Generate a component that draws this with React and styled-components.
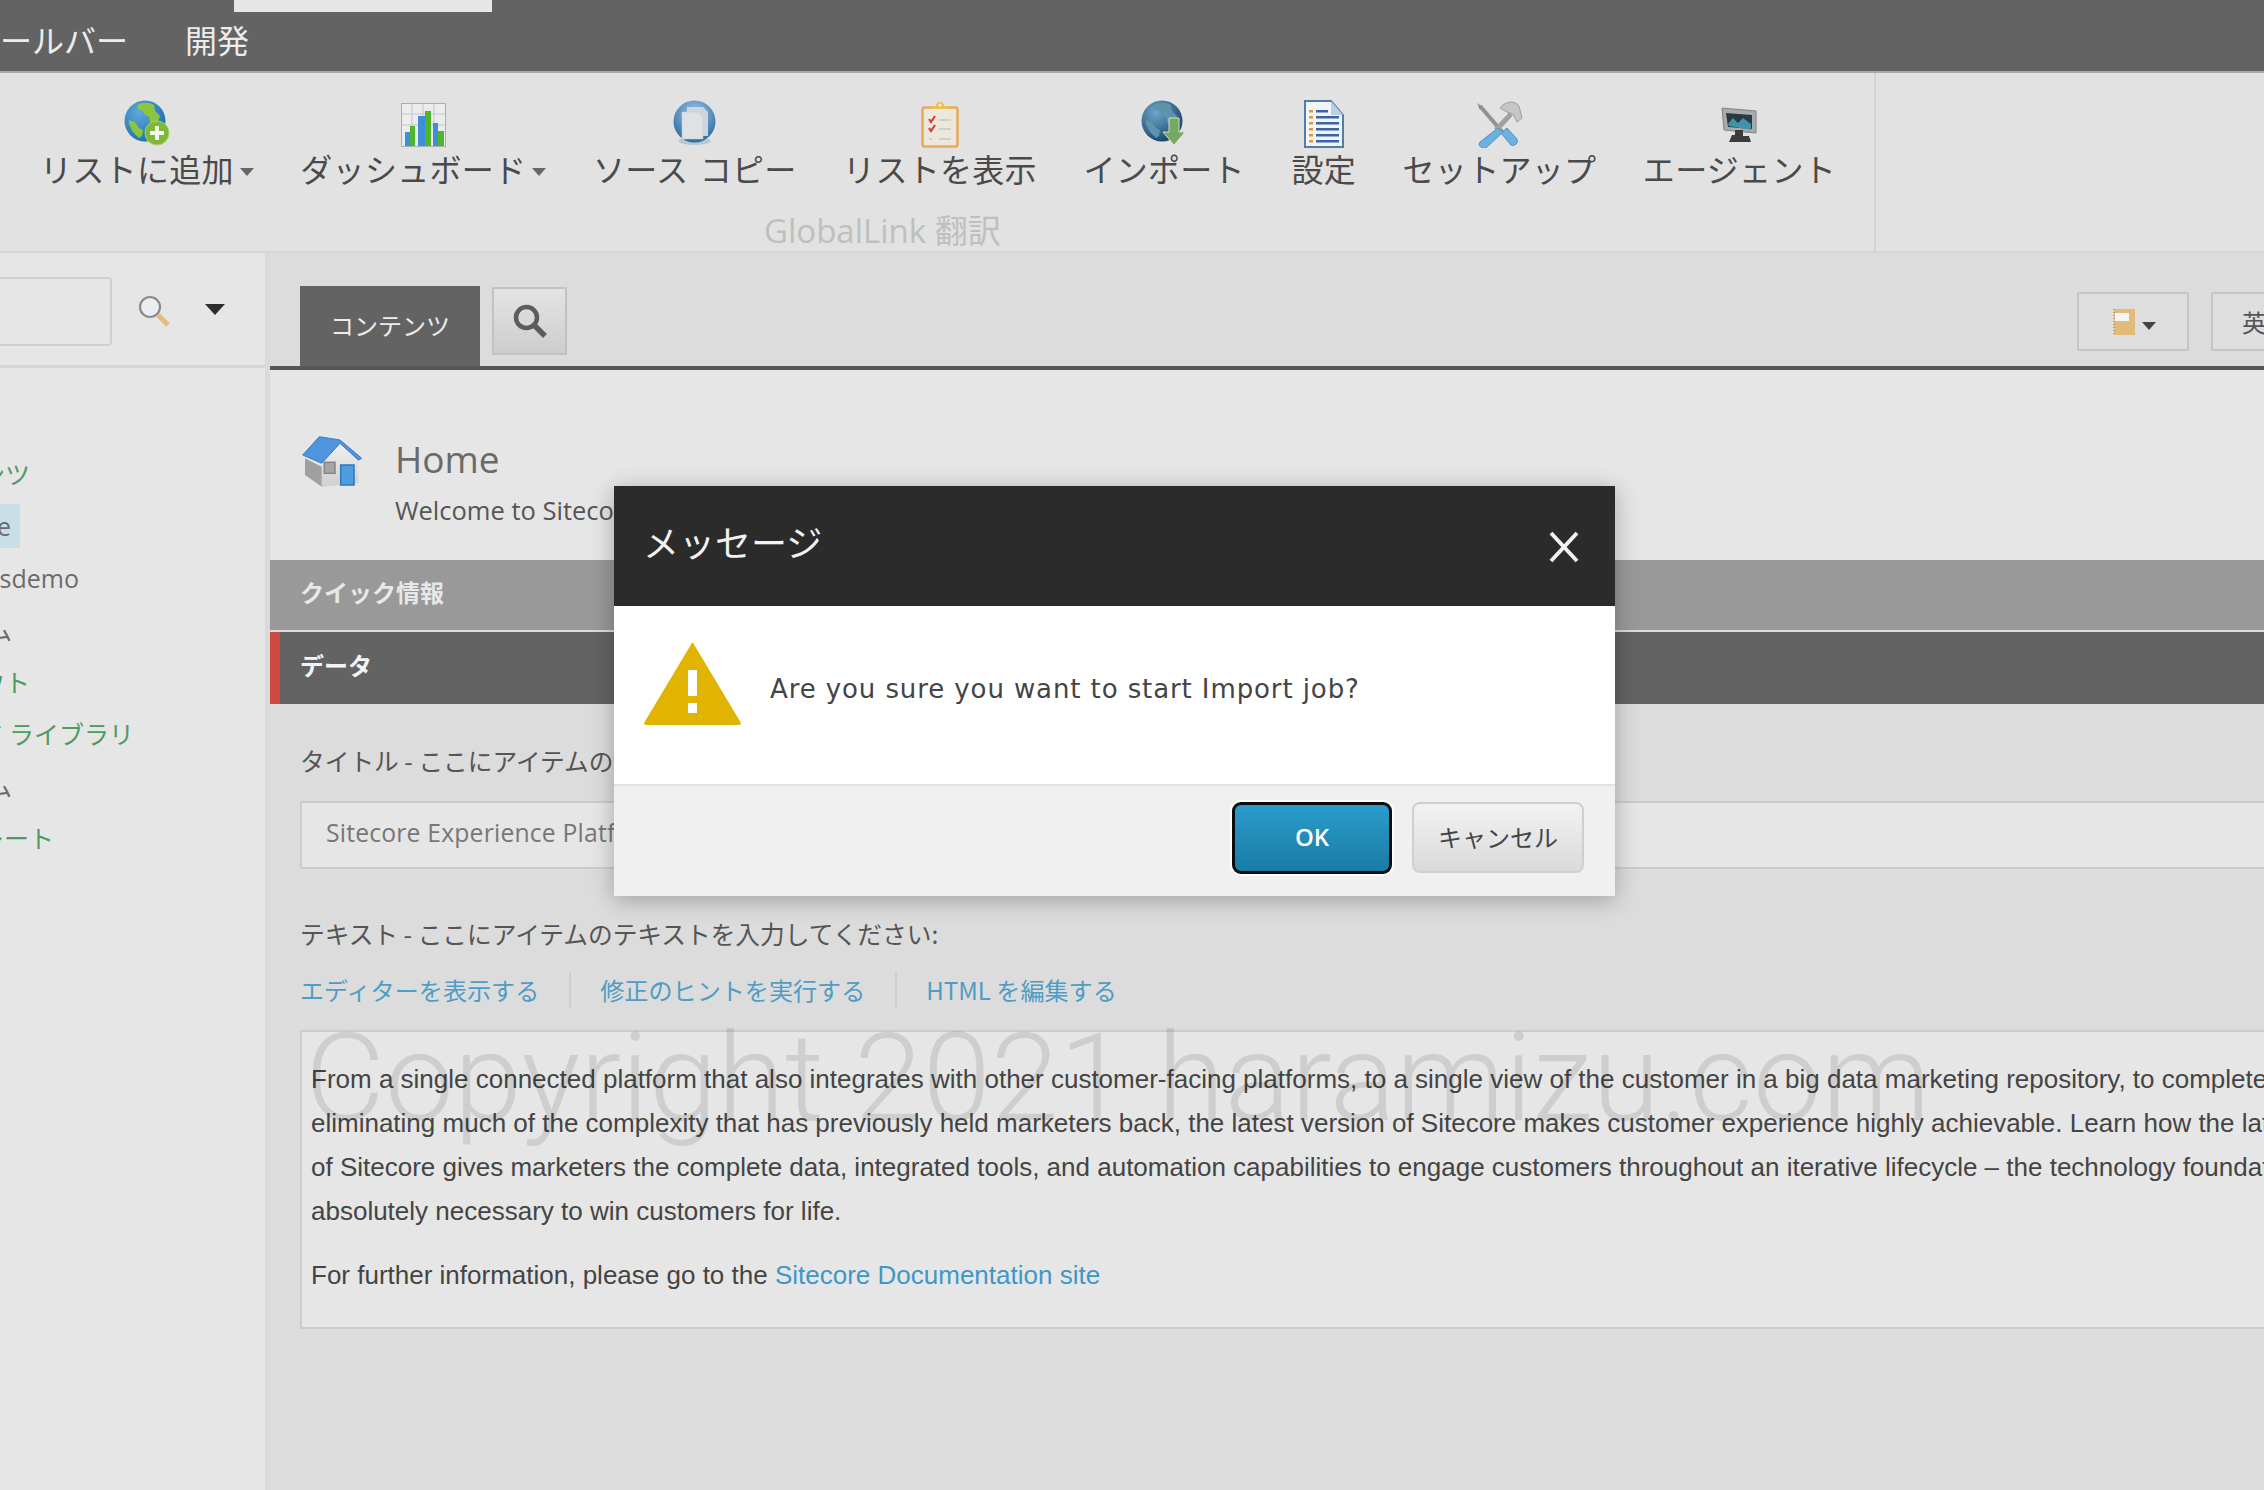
import React from 'react';
import styled, { createGlobalStyle } from 'styled-components';

const Global = createGlobalStyle`
  html, body { margin: 0; padding: 0; background: #dcdcdc; }
  * { box-sizing: border-box; }
  body { font-family: "Noto Sans CJK JP", "Open Sans", sans-serif; }
`;
const CJK = `"Noto Sans CJK JP", "Noto Sans", sans-serif`;
const LATIN = `"Open Sans", "Noto Sans CJK JP", sans-serif`;

const Page = styled.div`
  position: relative; width: 2264px; height: 1490px; overflow: hidden;
  display: flex; flex-direction: column; background: #dcdcdc;
`;
const TopBar = styled.header`
  position: relative; flex: none; height: 73px; background: #636363; border-bottom: 2px solid #a9a9a9;
  display: flex; align-items: center; gap: 57px; margin-left: -32px; padding-top: 7px;
`;
const MenuItem = styled.span`
  font: 400 32px/1 ${CJK}; color: #ececec; white-space: nowrap;
`;
const ActiveTabEdge = styled.div`
  position: absolute; left: 266px; top: 0; width: 258px; height: 12px; background: #e6e6e6;
`;
const Ribbon = styled.section`
  position: relative; flex: none; height: 180px; background: #e2e2e2; border-bottom: 2px solid #d6d6d6;
  display: flex;
`;
const RibbonGroup = styled.div`
  flex: none; width: 1876px; border-right: 2px solid #d4d4d4; display: flex; flex-direction: column;
`;
const RibbonItems = styled.div`
  display: flex; gap: 46.5px; padding: 27px 0 0 40px;
`;
const RibbonItem = styled.div`
  display: flex; flex-direction: column; align-items: center; flex: none;
`;
const IconSlot = styled.div`
  height: 48px; display: flex; align-items: flex-start; justify-content: center;
`;
const RibbonLabel = styled.div`
  font: 400 32px/40px ${CJK}; color: #4a4a4a; white-space: nowrap; display: flex; align-items: center; letter-spacing: .3px; word-spacing: 4px;
`;
const Caret = styled.span`
  width: 0; height: 0; margin: 8px 0 0 6px;
  border-left: 7px solid transparent; border-right: 7px solid transparent;
  border-top: 8px solid ${p => p.$color || '#666'};
`;
const GroupTitle = styled.div`
  margin: 25px 0 0 764px; font: 400 33px/36px ${LATIN}; color: #bfbfbf; white-space: nowrap;
`;
const Workspace = styled.div`
  flex: 1; display: flex; min-height: 0;
`;
const Sidebar = styled.aside`
  flex: none; width: 265px; background: #e6e6e6; overflow: hidden; display: flex; flex-direction: column;
`;
const SearchRow = styled.div`
  flex: none; height: 115px; border-bottom: 3px solid #d4d4d4; display: flex; align-items: center; padding-top: 4px;
`;
const SearchInput = styled.div`
  width: 112px; height: 69px; background: #e6e6e6; border: 2px solid #cfcfcf; border-left: 0; border-radius: 0 4px 4px 0;
`;
const SearchGlass = styled.div`
  margin-left: 26px; display: flex;
`;
const SearchCaret = styled.span`
  width: 0; height: 0; margin-left: 35px; margin-bottom: 4px;
  border-left: 10px solid transparent; border-right: 10px solid transparent; border-top: 11px solid #2d2d2d;
`;
const Tree = styled.div`
  padding-top: 80px; display: flex; flex-direction: column;
`;
const TreeRow = styled.div`
  height: 52px; width: ${p => p.$end}px; display: flex; align-items: center; justify-content: flex-end;
`;
const TreeLabel = styled.span`
  flex: none; font: 400 25px/44px ${LATIN}; white-space: nowrap; color: ${p => p.$green ? '#4f9a63' : '#6b6b6b'};
  background: ${p => p.$selected ? '#c8dfe8' : 'transparent'}; padding-right: ${p => p.$selected ? 9 : 0}px;
`;
const Gutter = styled.div`
  flex: none; width: 5px; background: #dadada;
`;
const Main = styled.main`
  flex: 1; min-width: 0; overflow: hidden; background: #dcdcdc; display: flex; flex-direction: column;
`;
const TabBar = styled.div`
  flex: none; height: 117px; border-bottom: 4px solid #565656; padding-left: 30px; display: flex; align-items: flex-start; background: #dcdcdc;
`;
const ActiveTab = styled.div`
  flex: none; margin-top: 33px; width: 180px; height: 80px; background: #636363; color: #ececec; font: 400 24px/78px ${CJK}; text-align: center;
`;
const SearchButton = styled.div`
  flex: none; margin: 34px 0 0 12px; width: 75px; height: 68px; border: 2px solid #c2c2c2;
  background: linear-gradient(#e4e4e4, #cdcdcd); display: flex; align-items: center; justify-content: center;
`;
const ToolButton = styled.div`
  flex: none; margin: 39px 0 0 ${p => p.$gap}px; width: ${p => p.$w}px; height: 59px; border: 2px solid #c6c6c6; border-radius: 2px;
  background: #dedede; display: flex; align-items: center; padding-left: ${p => p.$pad}px;
  font: 400 24px/1 ${CJK}; color: #555; white-space: nowrap;
`;
const Hero = styled.div`
  flex: none; height: 190px; background: #e6e6e6; padding: 62px 0 0 30px; display: flex;
`;
const HeroText = styled.div`
  margin: 1px 0 0 32px; display: flex; flex-direction: column;
`;
const HeroTitle = styled.div`
  font: 400 37px/52px ${LATIN}; color: #6a6a6a;
`;
const HeroSub = styled.div`
  margin-top: 3px; font: 400 25.5px/44px ${LATIN}; color: #555; white-space: nowrap;
`;
const SectionBar = styled.div`
  flex: none; height: ${p => p.$h}px; background: ${p => p.$bg}; color: ${p => p.$fg};
  padding-left: ${p => p.$accent ? 20 : 30}px; border-left: ${p => p.$accent ? '10px solid #cd4a45' : '0'};
  margin-bottom: ${p => p.$accent ? 0 : 2}px;
  font: 700 24px/${p => p.$h - 7}px ${CJK};
`;
const Form = styled.div`
  padding-left: 30px; width: 2100px; flex: 1;
`;
const FieldLabel = styled.div`
  margin-top: ${p => p.$mt}px; font: 400 24.7px/36px ${CJK}; color: #555; white-space: nowrap;
`;
const TextField = styled.div`
  margin-top: 23px; height: 68px; background: #e6e6e6; border: 2px solid #cccccc; border-radius: 3px;
  padding-left: 24px; font: 400 24.7px/60px ${LATIN}; color: #777; letter-spacing: .2px;
`;
const LinkRow = styled.div`
  margin-top: 21px; height: 35px; display: flex; align-items: center;
`;
const EditorLink = styled.a`
  font: 400 24.1px/35px ${CJK}; color: #4f9dc4; white-space: nowrap;
  & + & { margin-left: 30px; padding-left: 29px; border-left: 2px solid #cdcdcd; }
`;
const RichBox = styled.div`
  margin-top: 23px; height: 299px; background: #e6e6e6; border: 2px solid #cccccc; padding: 25px 0 0 9px; overflow: hidden;
`;
const RichLine = styled.div`
  font: 400 26px/44px "Liberation Sans", Arial, sans-serif; color: #444; white-space: nowrap; margin-top: ${p => p.$mt || 0}px;
`;
const DocLink = styled.a`
  color: #3f97c6;
`;
const Watermark = styled.div`
  position: absolute; left: 305px; top: 1008px; font: 300 123px/1.15 Roboto, sans-serif; color: rgba(0,0,0,.1);
  white-space: nowrap; pointer-events: none;
`;
const Dialog = styled.div`
  position: absolute; left: 614px; top: 486px; width: 1001px; height: 410px; display: flex; flex-direction: column;
  box-shadow: 0 4px 22px rgba(0,0,0,.28);
`;
const DialogHeader = styled.div`
  flex: none; height: 120px; background: #2b2b2b; display: flex; align-items: center; justify-content: space-between; padding: 0 36px 10px 29px;
`;
const DialogTitle = styled.div`
  font: 400 36px/1 ${CJK}; color: #f2f2f2;
`;
const CloseIcon = styled.svg`
  display: block; margin-top: 12px;
`;
const DialogBody = styled.div`
  flex: none; height: 178px; background: #fff; display: flex; align-items: flex-start; padding: 36px 0 0 30px;
`;
const DialogText = styled.div`
  margin: 27px 0 0 29px; font: 400 26px/40px "DejaVu Sans", sans-serif; color: #444; white-space: nowrap; letter-spacing: .9px;
`;
const DialogFooter = styled.div`
  flex: 1; background: #f0f0f0; border-top: 2px solid #e3e3e3; display: flex; justify-content: flex-end; align-items: flex-start; gap: 20px; padding: 16px 31px 0 0;
`;
const PrimaryButton = styled.button`
  width: 160px; height: 72px; border: 3px solid #0c0c0c; border-radius: 9px; background: linear-gradient(#2a9ccc, #1b7ba6);
  font: 600 24px/1 ${LATIN}; color: #fff; box-shadow: 0 0 0 2px #fff; padding: 0 0 2px;
`;
const SecondaryButton = styled.button`
  width: 172px; height: 71px; border: 2px solid #cfcfcf; border-radius: 8px; background: linear-gradient(#f2f2f2, #dadada);
  font: 400 24px/1 ${CJK}; color: #444; padding: 0 0 2px;
`;

const GlobeBase = ({ id, hi = '#5ea9dc', lo = '#1b6aa8', land = '#8cc63f', children }) => (
  <svg width="46" height="46" viewBox="0 0 46 46">
    <defs>
      <radialGradient id={id} cx=".35" cy=".3" r=".8">
        <stop offset="0" stopColor={hi} /><stop offset="1" stopColor={lo} />
      </radialGradient>
    </defs>
    <circle cx="21" cy="21" r="20.5" fill={`url(#${id})`} />
    {land && <path d="M13 5c5-3 12-3 17 0l1 6 5 5-2 6-5 3-3-3-1-5-5-3-1-3-5-2zM5 20l6 2 4 6 4 2-1 6-3 2-6-6-4-8z" fill={land} />}
    {children}
  </svg>
);
const IconAdd = () => (
  <GlobeBase id="g1">
    <circle cx="33" cy="33" r="12" fill="#7db83a" stroke="#a8d36a" strokeWidth="1" />
    <path d="M33 26v14M26 33h14" stroke="#f4f9ee" strokeWidth="4" />
  </GlobeBase>
);
const IconChart = () => (
  <svg width="45" height="47" viewBox="0 -3 45 47">
    <rect x=".5" y=".5" width="44" height="43" fill="#ececec" stroke="#a9adb5" />
    <path d="M11 1v42M22 1v42M33 1v42M1 11h43M1 22h43" stroke="#c6c6c6" />
    <rect x="4" y="29" width="5" height="14" fill="#3d8fdc" /><rect x="9" y="23" width="5" height="20" fill="#4fb52a" />
    <rect x="17" y="13" width="7" height="30" fill="#3d8fdc" /><rect x="24" y="8" width="6" height="35" fill="#4fb52a" />
    <rect x="32" y="20" width="5" height="23" fill="#3d8fdc" /><rect x="37" y="28" width="6" height="15" fill="#4fb52a" />
  </svg>
);
const IconCopy = () => (
  <svg width="43" height="46" viewBox="0 0 43 46">
    <defs><radialGradient id="g2" cx=".5" cy=".3" r=".8"><stop offset="0" stopColor="#9cc6e8" /><stop offset="1" stopColor="#1b5e98" /></radialGradient></defs>
    <ellipse cx="21.5" cy="41" rx="16" ry="4" fill="#9fb6c8" opacity=".6" />
    <circle cx="21.5" cy="21.5" r="21" fill="url(#g2)" />
    <path d="M14 7h16l5 5v24H14z" fill="#cfd5da" /><path d="M9 12h16l5 5v22H9z" fill="#dfe2e5" stroke="#c4c8cc" strokeWidth=".5" />
  </svg>
);
const IconClipboard = () => (
  <svg width="38" height="48" viewBox="0 0 38 48">
    <rect x="1.5" y="7.5" width="35" height="39" rx="2" fill="#eee8dc" stroke="#e6a95a" strokeWidth="2.5" />
    <path d="M10 9V6h5a4 4 0 0 1 8 0h5v3z" fill="#f0bd55" /><circle cx="19" cy="5" r="1.5" fill="#fff3d6" />
    <path d="M8 19l2 3 4-6M8 28l2 3 4-6" stroke="#d6403a" strokeWidth="2.2" fill="none" />
    <path d="M18 20h12M18 29h12M18 39h12M8 39h3" stroke="#cfcfcf" strokeWidth="2" />
  </svg>
);
const IconImport = () => (
  <GlobeBase id="g3" hi="#6ea6c8" lo="#123f66" land="#5f93aa">
    <path d="M28 18h10v14h6L33 45 22 32h6z" fill="#75a860" stroke="#cfe0c4" strokeWidth="1" />
  </GlobeBase>
);
const IconDoc = () => (
  <svg width="40" height="48" viewBox="0 0 40 48">
    <path d="M1 1h26l12 14v32H1z" fill="#f1f5fa" stroke="#4f7fa8" strokeWidth="2" />
    <path d="M27 1v14h12z" fill="#bcd0e0" />
    {[11, 17, 23, 29, 35, 41].map((y, i) => (
      <g key={y}>
        <rect x="5" y={y - 1} width="4" height="2.5" fill="#e8962c" />
        <rect x="12" y={y - 1} width={i < 1 ? 12 : 23} height="2.5" fill="#3a63a8" />
      </g>
    ))}
  </svg>
);
const IconTools = () => (
  <svg width="50" height="48" viewBox="0 0 50 48">
    <path d="M6 6l24 28" stroke="#8d9296" strokeWidth="4" />
    <path d="M3 3l6 4-3 3z" fill="#8d9296" />
    <path d="M27 33l10 12c3 2 8-2 6-6L33 28z" fill="#6fb1de" stroke="#4f93c4" />
    <path d="M37 14L22 30" stroke="#a0a0a0" strokeWidth="5" />
    <path d="M24 28L6 42c-3 4 3 8 7 5l16-15z" fill="#6fb1de" stroke="#4f93c4" />
    <path d="M26 8c6-7 14-8 19-2l3 12-5 4-4-8-6-2z" fill="#c6c6c6" stroke="#9d9d9d" />
  </svg>
);
const IconAgent = () => (
  <svg width="38" height="44" viewBox="0 -6 38 44">
    <path d="M2 2l34 3v22L4 24z" fill="#a9acae" stroke="#7f8183" />
    <path d="M6 7l26 2v14L8 21z" fill="#2a3a42" />
    <path d="M8 18l5-6 5 5 5-5 8 6v6L9 20z" fill="#3f93ad" />
    <path d="M15 24h8v6h6l2 6H9l3-7h3z" fill="#3c3c3c" />
  </svg>
);
const IconHouse = () => (
  <svg width="63" height="56" viewBox="0 0 63 56">
    <defs><linearGradient id="hw" x1="0" x2="0" y1="0" y2="1"><stop offset="0" stopColor="#f2f2f2" /><stop offset="1" stopColor="#cfcfcf" /></linearGradient></defs>
    <path d="M21.7 34.7L40 11.3 58.3 28v23.3L21.7 54.7z" fill="url(#hw)" />
    <path d="M5 26.3l16.7 8.4v20L5 43z" fill="#a0a0a0" />
    <rect x="24.3" y="30.3" width="10.7" height="11" fill="#a6a6a6" stroke="#858585" strokeWidth="1.5" />
    <rect x="40.7" y="33" width="13.3" height="20" fill="#4d9de0" stroke="#2a78c0" strokeWidth="1.5" />
    <path d="M2.7 23L19.3 4.7 40 8l21.7 18.3L58.3 28 40 11.3 21.7 31.3z" fill="#4f95de" stroke="#3a7cc4" />
  </svg>
);
const IconGlass = () => (
  <svg width="32" height="32" viewBox="0 0 32 32">
    <circle cx="12" cy="12" r="10" fill="#e9eef0" stroke="#8a8a8a" strokeWidth="2.2" />
    <path d="M20 20l10 10" stroke="#e3bd7d" strokeWidth="5" />
  </svg>
);
const IconSearchDark = () => (
  <svg width="34" height="34" viewBox="0 0 34 34">
    <circle cx="13.5" cy="13.5" r="10.5" fill="none" stroke="#5c5c5c" strokeWidth="4.5" />
    <path d="M21 21l11 11" stroke="#5c5c5c" strokeWidth="5.5" />
  </svg>
);
const IconNote = () => (
  <svg width="23" height="28" viewBox="0 0 23 28">
    <rect x="1" y="1" width="21" height="26" fill="#e3bb78" />
    <rect x="2" y="5" width="14" height="8" fill="#f4f4f4" />
    <path d="M1 1v26" stroke="#777" strokeDasharray="1 2" />
  </svg>
);

const ribbonItems = [
  { label: 'リストに追加', icon: <IconAdd />, caret: true },
  { label: 'ダッシュボード', icon: <IconChart />, caret: true },
  { label: 'ソース コピー', icon: <IconCopy /> },
  { label: 'リストを表示', icon: <IconClipboard /> },
  { label: 'インポート', icon: <IconImport /> },
  { label: '設定', icon: <IconDoc /> },
  { label: 'セットアップ', icon: <IconTools /> },
  { label: 'エージェント', icon: <IconAgent /> },
];
const treeItems = [
  { text: 'コンテンツ', end: 30, green: true },
  { text: 'Home', end: 20, selected: true },
  { text: 'jsdemo', end: 79 },
  { text: 'フォーム', end: 12 },
  { text: 'レイアウト', end: 30, green: true },
  { text: 'メディア ライブラリ', end: 134, green: true },
  { text: 'システム', end: 12 },
  { text: 'テンプレート', end: 54, green: true },
];

export default function App() {
  return (
    <Page>
      <Global />
      <TopBar>
        <MenuItem>ツールバー</MenuItem>
        <MenuItem>開発</MenuItem>
        <ActiveTabEdge />
      </TopBar>
      <Ribbon>
        <RibbonGroup>
          <RibbonItems>
            {ribbonItems.map(it => (
              <RibbonItem key={it.label}>
                <IconSlot>{it.icon}</IconSlot>
                <RibbonLabel>{it.label}{it.caret && <Caret />}</RibbonLabel>
              </RibbonItem>
            ))}
          </RibbonItems>
          <GroupTitle>GlobalLink 翻訳</GroupTitle>
        </RibbonGroup>
      </Ribbon>
      <Workspace>
        <Sidebar>
          <SearchRow>
            <SearchInput />
            <SearchGlass><IconGlass /></SearchGlass>
            <SearchCaret />
          </SearchRow>
          <Tree>
            {treeItems.map(t => (
              <TreeRow key={t.text} $end={t.end}>
                <TreeLabel $green={t.green} $selected={t.selected}>{t.text}</TreeLabel>
              </TreeRow>
            ))}
          </Tree>
        </Sidebar>
        <Gutter />
        <Main>
          <TabBar>
            <ActiveTab>コンテンツ</ActiveTab>
            <SearchButton><IconSearchDark /></SearchButton>
            <ToolButton $gap={1510} $w={112} $pad={34}><IconNote /><Caret $color="#444" /></ToolButton>
            <ToolButton $gap={22} $w={120} $pad={29}>英語</ToolButton>
          </TabBar>
          <Hero>
            <IconHouse />
            <HeroText>
              <HeroTitle>Home</HeroTitle>
              <HeroSub>Welcome to Sitecore</HeroSub>
            </HeroText>
          </Hero>
          <SectionBar $h={70} $bg="#999999" $fg="#e8e8e8">クイック情報</SectionBar>
          <SectionBar $h={72} $bg="#636363" $fg="#f4f4f4" $accent>データ</SectionBar>
          <Form>
            <FieldLabel $mt={38}>タイトル - ここにアイテムのタイトルを入力してください:</FieldLabel>
            <TextField>Sitecore Experience Platform</TextField>
            <FieldLabel $mt={46}>テキスト - ここにアイテムのテキストを入力してください:</FieldLabel>
            <LinkRow>
              <EditorLink>エディターを表示する</EditorLink>
              <EditorLink>修正のヒントを実行する</EditorLink>
              <EditorLink>HTML を編集する</EditorLink>
            </LinkRow>
            <RichBox>
              <RichLine>From a single connected platform that also integrates with other customer-facing platforms, to a single view of the customer in a big data marketing repository, to completely</RichLine>
              <RichLine>eliminating much of the complexity that has previously held marketers back, the latest version of Sitecore makes customer experience highly achievable. Learn how the latest version</RichLine>
              <RichLine>of Sitecore gives marketers the complete data, integrated tools, and automation capabilities to engage customers throughout an iterative lifecycle – the technology foundation</RichLine>
              <RichLine>absolutely necessary to win customers for life.</RichLine>
              <RichLine $mt={20}>For further information, please go to the <DocLink>Sitecore Documentation site</DocLink></RichLine>
            </RichBox>
          </Form>
        </Main>
      </Workspace>
      <Watermark>Copyright 2021 haramizu.com</Watermark>
      <Dialog>
        <DialogHeader>
          <DialogTitle>メッセージ</DialogTitle>
          <CloseIcon width="30" height="32" viewBox="0 0 30 32"><path d="M2 2l26 28M28 2L2 30" stroke="#f2f2f2" strokeWidth="4" /></CloseIcon>
        </DialogHeader>
        <DialogBody>
          <svg width="97" height="83" viewBox="0 0 97 83">
            <path d="M48.5 0L97 81q0 2-2 2H2q-2 0-2-2z" fill="#e0b400" />
            <rect x="44" y="28" width="9" height="26" fill="#fff" /><rect x="44" y="61" width="9" height="10" fill="#fff" />
          </svg>
          <DialogText>Are you sure you want to start Import job?</DialogText>
        </DialogBody>
        <DialogFooter>
          <PrimaryButton>OK</PrimaryButton>
          <SecondaryButton>キャンセル</SecondaryButton>
        </DialogFooter>
      </Dialog>
    </Page>
  );
}
